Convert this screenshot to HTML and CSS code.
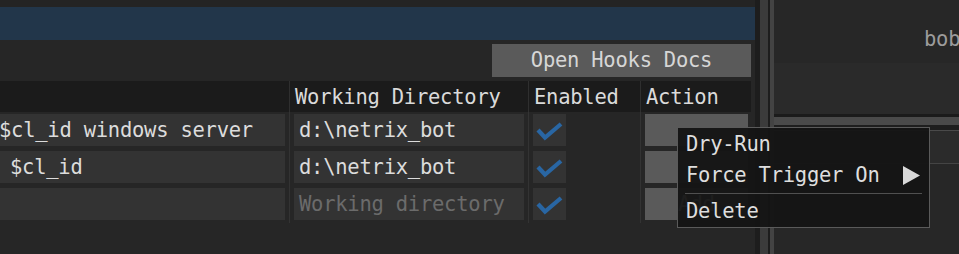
FILE: index.html
```html
<!DOCTYPE html>
<html>
<head>
<meta charset="utf-8">
<link rel="stylesheet" href="styles.css">
</head>
<body>
<div class="app">
  <div class="left">
    <div class="topband"></div>
    <div class="bluebar"></div>
    <div class="toolbar"><div class="btn docs">Open Hooks Docs</div></div>
    <div class="table">
      <div class="th first"></div>
      <div class="th">Working Directory</div>
      <div class="th">Enabled</div>
      <div class="th">Action</div>

      <div class="td first"><div class="input cmd-a">$cl_id windows server</div></div>
      <div class="td"><div class="input">d:\netrix_bot</div></div>
      <div class="td"><div class="check"><svg width="33" height="32" viewBox="0 0 33 32"><polyline points="5,16 12,23.5 28,10" fill="none" stroke="#2966a3" stroke-width="4.2"/></svg></div></div>
      <div class="td last"><div class="btn act"></div></div>

      <div class="td first"><div class="input cmd-b">$cl_id</div></div>
      <div class="td"><div class="input">d:\netrix_bot</div></div>
      <div class="td"><div class="check"><svg width="33" height="32" viewBox="0 0 33 32"><polyline points="5,16 12,23.5 28,10" fill="none" stroke="#2966a3" stroke-width="4.2"/></svg></div></div>
      <div class="td last"><div class="btn act"></div></div>

      <div class="td first"><div class="input"></div></div>
      <div class="td"><div class="input placeholder">Working directory</div></div>
      <div class="td"><div class="check"><svg width="33" height="32" viewBox="0 0 33 32"><polyline points="5,16 12,23.5 28,10" fill="none" stroke="#2966a3" stroke-width="4.2"/></svg></div></div>
      <div class="td last"><div class="btn act">Add</div></div>
    </div>
  </div>
  <div class="splitter">
    <div class="s-dark"></div>
    <div class="s-grip"></div>
    <div class="s-dark2"></div>
    <div class="s-edge"></div>
  </div>
  <div class="right">
    <div class="r-top">
      <div class="r-top-a"><span class="bob">bob</span></div>
      <div class="r-top-b"></div>
    </div>
    <div class="r-dark"></div>
    <div class="r-grip"></div>
    <div class="r-dark2"></div>
    <div class="r-box"></div>
    <div class="r-rest"></div>
  </div>

  <div class="menu">
    <div class="item">Dry-Run</div>
    <div class="item sub"><span>Force Trigger On</span><svg width="17" height="19" viewBox="0 0 17 19"><polygon points="0,0 17,9.5 0,19" fill="#d9d9d9"/></svg></div>
    <div class="sep"></div>
    <div class="item">Delete</div>
  </div>
</div>
</body>
</html>
```

FILE: styles.css
```css
* { box-sizing: border-box; }
html, body {
  margin: 0;
  padding: 0;
  background: #262626;
  width: 959px;
  height: 254px;
  overflow: hidden;
}
body {
  font-family: "DejaVu Sans Mono", "Liberation Mono", monospace;
  font-size: 20.5px;
  letter-spacing: -0.25px;
  color: #dcdcdc;
}
.app {
  position: relative;
  display: flex;
  width: 959px;
  height: 254px;
}
.left {
  width: 755px;
  flex: none;
  display: flex;
  flex-direction: column;
}
.topband { height: 7px; background: #242424; }
.bluebar { height: 33px; background: #22364a; }
.toolbar {
  height: 33px;
  margin: 4px 0;
  padding-right: 4px;
  display: flex;
  justify-content: flex-end;
}
.btn {
  background: #5a5a5a;
  color: #d6d6d6;
  text-align: center;
  white-space: nowrap;
}
.docs { width: 259px; height: 33px; line-height: 33px; }

.table {
  width: 751px;
  display: grid;
  grid-template-columns: 289px 239px 112px 111px;
}
.th {
  height: 31px;
  background: #1b1b1b;
  border-left: 1px solid #2f2f2f;
  padding: 2px 0 0 5px;
  line-height: 29px;
  white-space: nowrap;
  color: #dadada;
}
.th.first { border-left: none; }
.td {
  height: 37px;
  padding: 2px 4px 3px;
  border-left: 1px solid #333333;
}
.td.first { border-left: none; padding-left: 0; }
.td.last { padding-right: 3px; }
.input {
  height: 32px;
  line-height: 32px;
  background: #333333;
  padding-left: 5px;
  white-space: nowrap;
  overflow: hidden;
  color: #dcdcdc;
}
.input.cmd-a { padding-left: 0; text-indent: -1px; }
.input.cmd-b { padding-left: 10px; }
.input.placeholder { color: #6b6b6b; }
.check {
  width: 33px;
  height: 32px;
  background: #333333;
}
.check svg { display: block; }
.act { height: 32px; line-height: 32px; width: 103px; }

.splitter { display: flex; flex: none; height: 254px; }
.s-dark { width: 5px; background: #1d1d1d; }
.s-grip { width: 8px; background: #3b3b3b; }
.s-dark2 { width: 2px; background: #1d1d1d; }
.s-edge { width: 4px; background: #434343; }

.right {
  flex: 1;
  display: flex;
  flex-direction: column;
  overflow: hidden;
}
.r-top { height: 114px; display: flex; flex-direction: column; }
.r-top-a {
  height: 63px;
  background: #272727;
  padding: 27px 0 0 150px;
  line-height: 24px;
  white-space: nowrap;
}
.bob { color: #9c9c9c; }
.r-top-b { flex: 1; background: #2a2a2a; }
.r-dark { height: 3px; background: #1b1b1b; }
.r-grip { height: 8px; background: #4a4a4a; }
.r-dark2 { height: 5px; background: #1e1e1e; }
.r-box {
  height: 34px;
  background: #2b2b2b;
  border-top: 1px solid #4a4a4a;
  border-bottom: 1px solid #444444;
}
.r-rest { flex: 1; background: #272727; }

.menu {
  position: absolute;
  left: 677px;
  top: 127px;
  width: 253px;
  border: 1px solid #5a5a5a;
  background: rgba(20, 20, 20, 0.95);
  padding: 1px 7px 0;
}
.item {
  height: 31px;
  line-height: 31px;
  padding: 0 2px 0 1px;
  white-space: nowrap;
  color: #dedede;
}
.item.sub {
  display: flex;
  justify-content: space-between;
  align-items: center;
}
.item.sub svg { display: block; }
.sep {
  height: 1px;
  background: #505050;
  margin: 2px 0 2px;
}
```
